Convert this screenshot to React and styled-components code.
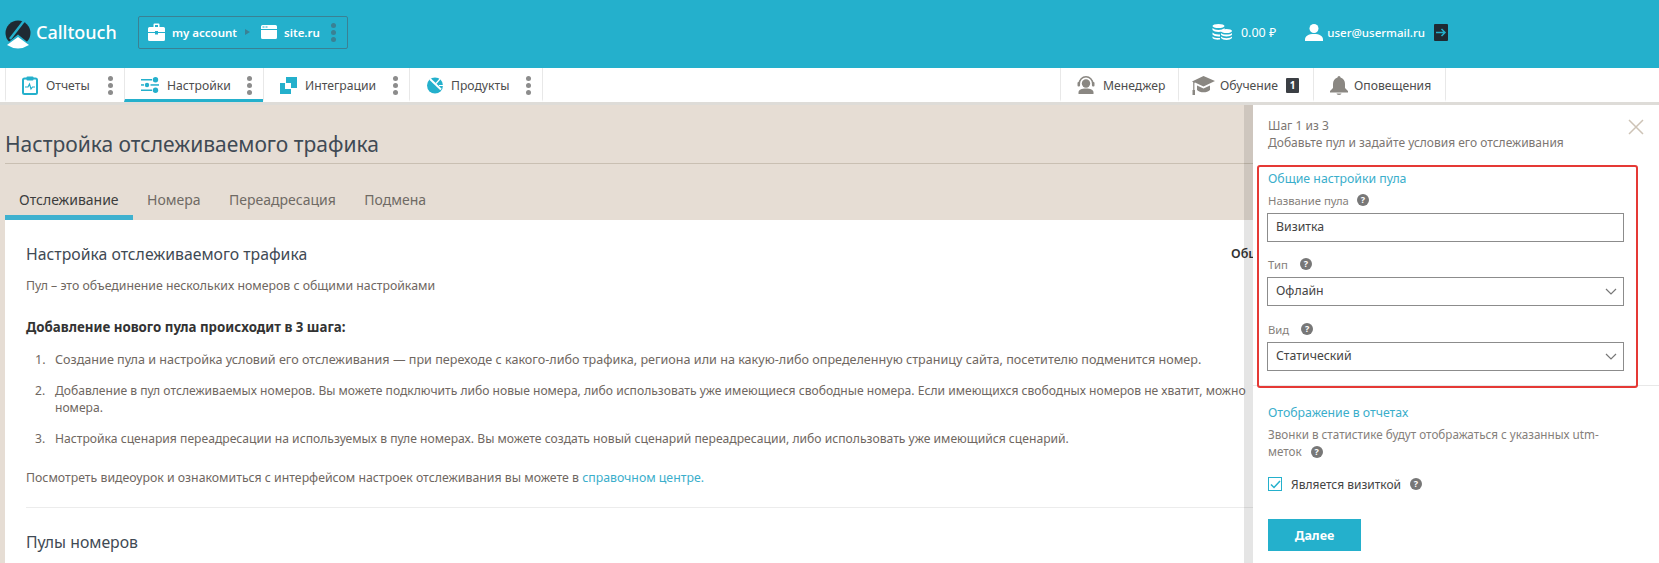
import React from 'react';
import styled, { createGlobalStyle } from 'styled-components';

const TEAL = '#24b0cc';
const FONT = '"Noto Sans", "Open Sans", sans-serif';

const GlobalStyle = createGlobalStyle`
  html, body { margin: 0; padding: 0; height: 100%; overflow: hidden; }
  body { font-family: ${FONT}; background: #fff; }
  * { box-sizing: border-box; }
`;

const Logo = () => (
  <svg width="26" height="29" viewBox="0 0 26 29">
    <circle cx="13" cy="13" r="12.5" fill="#1f2a33" />
    <path d="M0 25 L13 14.5 L26 25 V29 H0 Z" fill={TEAL} />
    <path d="M20.5 -1 L5 19" stroke={TEAL} strokeWidth="2.4" fill="none" />
    <path d="M13 17 L24 25 Q13 32 2 25 Z" fill="#fff" />
  </svg>
);

const Briefcase = () => (
  <svg width="17" height="18" viewBox="0 0 17 18" fill="#fff">
    <path d="M5.5 4V1.5A1 1 0 0 1 6.5.5h4a1 1 0 0 1 1 1V4H10V2H7v2z" />
    <path d="M1.5 4h14A1.5 1.5 0 0 1 17 5.5V9H10V8H7v1H0V5.5A1.5 1.5 0 0 1 1.5 4z" />
    <path d="M0 10h7v1.5h3V10h7v6.5a1.5 1.5 0 0 1-1.5 1.5h-14A1.5 1.5 0 0 1 0 16.5z" />
  </svg>
);

const WindowIcon = () => (
  <svg width="16" height="14" viewBox="0 0 16 14">
    <path d="M1.5 0h13A1.5 1.5 0 0 1 16 1.5V4H0V1.5A1.5 1.5 0 0 1 1.5 0z" fill="#fff" />
    <rect x="1.5" y="1.5" width="2" height="1" fill={TEAL} />
    <rect x="4.5" y="1.5" width="2" height="1" fill={TEAL} />
    <path d="M0 5h16v7.5a1.5 1.5 0 0 1-1.5 1.5h-13A1.5 1.5 0 0 1 0 12.5z" fill="#fff" />
  </svg>
);

const Coins = () => (
  <svg width="20" height="16" viewBox="0 0 20 16" fill="#fff">
    <ellipse cx="6.5" cy="2" rx="6" ry="2" />
    <path d="M.5 4c1 1.3 3.5 2 6 2s5-.7 6-2v2c-1 1.3-3.5 2-6 2s-5-.7-6-2z" />
    <path d="M.5 8.5c1 1.3 3.5 2 6 2 .5 0 1 0 1.5-.1v2c-.5.1-1 .1-1.5.1-2.500 0-5-.7-6-2z" />
    <path d="M.5 12.5c1 1 3.5 1.5 6 1.5.5 0 1 0 1.5-.1v1.600c-2.800.4-6.500 0-7.500-1.400z" />
    <ellipse cx="14.5" cy="7" rx="5.5" ry="2" />
    <path d="M9 9c1 1 3 1.6 5.5 1.6S19 10 20 9v1.800c-1 1.100-3 1.700-5.500 1.700S10 11.900 9 10.800z" />
    <path d="M9 12.6c1 1 3 1.6 5.5 1.6s4.500-.6 5.500-1.600v1.500c-1 1.200-3 1.900-5.500 1.900S10 15.300 9 14.100z" />
  </svg>
);

const UserIcon = () => (
  <svg width="18" height="17" viewBox="0 0 18 17" fill="#fff">
    <circle cx="9" cy="4.5" r="4.5" />
    <path d="M0 17v-1.500C0 12 3.500 10 9 10s9 2 9 5.500V17z" />
  </svg>
);

const Logout = () => (
  <svg width="14" height="17" viewBox="0 0 14 17">
    <rect width="14" height="17" rx="1" fill="#1f2a33" />
    <path d="M2 8.500h9M7.500 5l3.500 3.500L7.500 12" stroke={TEAL} strokeWidth="1.5" fill="none" />
  </svg>
);

const ClipboardIcon = () => (
  <svg width="16" height="19" viewBox="0 0 16 19">
    <rect x="1" y="2.5" width="14" height="15.500" rx="1.5" fill="#fff" stroke={TEAL} strokeWidth="2" />
    <rect x="4.5" y="0.5" width="7" height="4" rx="1" fill={TEAL} />
    <path d="M3 11h3l1.500-3 1.500 5 1.500-2H13" stroke={TEAL} strokeWidth="1.2" fill="none" />
  </svg>
);

const SlidersIcon = () => (
  <svg width="18" height="16" viewBox="0 0 18 16" fill={TEAL}>
    <rect y="2" width="11" height="1.5" />
    <circle cx="14.5" cy="2.7" r="2.7" />
    <rect y="7.2" width="3" height="1.5" />
    <circle cx="6" cy="8" r="2.2" />
    <rect x="9.5" y="7.2" width="8.5" height="1.5" />
    <rect y="12.5" width="11" height="1.5" />
    <circle cx="14.5" cy="13.3" r="2.7" />
  </svg>
);

const SquaresIcon = () => (
  <svg width="17" height="17" viewBox="0 0 17 17" fill={TEAL}>
    <path d="M6 0h11v11h-6V6H6z" />
    <path d="M0 6h5v6h6v5H0z" />
  </svg>
);

const ProductIcon = () => (
  <svg width="16" height="17" viewBox="0 0 16 17">
    <circle cx="8" cy="8.5" r="8" fill={TEAL} />
    <path d="M3 2l11 10.500" stroke="#fff" strokeWidth="2" />
    <path d="M9 6.500L13 2M12 8.500h4" stroke="#fff" strokeWidth="1.2" />
  </svg>
);

const ManagerIcon = () => (
  <svg width="18" height="18" viewBox="0 0 18 18" fill="#8a8782">
    <path d="M9 0a7.500 7.500 0 0 1 7.500 7.500v1.800h-1.600V7.500a5.900 5.900 0 0 0-11.800 0v1.800H1.500V7.500A7.500 7.500 0 0 1 9 0z" />
    <circle cx="9" cy="7.5" r="4.2" />
    <rect x="0.5" y="6" width="2.5" height="4.5" rx="1" />
    <rect x="15" y="6" width="2.5" height="4.5" rx="1" />
    <path d="M1.500 18v-1.500c0-2.800 3-4 7.500-4s7.500 1.200 7.500 4V18z" />
  </svg>
);

const CapIcon = () => (
  <svg width="23" height="19" viewBox="0 0 23 19" fill="#8a8782">
    <path d="M11.500 0L23 5 11.500 10.500 3 6.500 2.400 7V14H1.200V6.200L0 5.500z" />
    <path d="M5 9.500l6.500 3 6.500-3V14c-1.500 1.500-4 2.300-6.500 2.300S6.500 15.500 5 14z" />
    <rect x="0.5" y="14" width="2.5" height="5" />
  </svg>
);

const BellIcon = () => (
  <svg width="18" height="19" viewBox="0 0 18 19" fill="#8a8782">
    <path d="M9 0a1.500 1.500 0 0 1 1.500 1.500C13.500 2.300 15 5 15 8v4l3 3v1.500H0V15l3-3V8c0-3 1.500-5.700 4.500-6.500A1.500 1.500 0 0 1 9 0z" />
    <path d="M6.500 17.500h5a2.500 1.500 0 0 1-5 0z" />
  </svg>
);

const Chevron = () => (
  <svg width="12" height="7" viewBox="0 0 12 7">
    <path d="M1 1l5 5 5-5" stroke="#777" strokeWidth="1.2" fill="none" />
  </svg>
);

const Header = styled.header`
  height: 68px;
  background: ${TEAL};
  display: flex;
  align-items: center;
  padding: 0 211px 4px 5px;
`;

const Brand = styled.div`
  display: flex;
  align-items: center;
  gap: 5px;
  color: #fff;
  font-size: 18px;
  font-weight: 500;
  width: 133px;
  svg { flex: none; margin-top: 4px; }
`;

const AccountBox = styled.div`
  width: 210px;
  height: 33px;
  border: 1px solid #3a8194;
  border-radius: 2px;
  display: flex;
  align-items: center;
  padding: 0 11px 0 9px;
  color: #fff;
  font-size: 11.5px;
  font-weight: 600;
  white-space: nowrap;
`;

const BoxText = styled.span`
  margin-left: ${p => p.$gap}px;
`;

const Crumb = styled.span`
  width: 0;
  height: 0;
  margin: 0 11px 0 8px;
  border-left: 5px solid #3a8194;
  border-top: 3px solid transparent;
  border-bottom: 3px solid transparent;
`;

const Dots = styled.span`
  flex: none;
  width: 5px;
  height: 5px;
  margin-left: auto;
  border-radius: 50%;
  background: ${p => p.$color || '#8c8c8c'};
  box-shadow: 0 -7px 0 ${p => p.$color || '#8c8c8c'}, 0 7px 0 ${p => p.$color || '#8c8c8c'};
`;

const Account = styled.div`
  margin-left: auto;
  display: flex;
  align-items: center;
  color: #fff;
  font-size: 12.5px;
`;

const AccountText = styled.span`
  margin: ${p => p.$margin};
  font-size: ${p => p.$size || 12.5}px;
  font-weight: ${p => p.$weight || 400};
`;

const Nav = styled.nav`
  height: 37px;
  display: flex;
  background: #fff;
  padding: 0 213px 0 5px;
  border-bottom: 3px solid #dedcd8;
`;

const NavItem = styled.div`
  width: ${p => p.$width}px;
  display: flex;
  align-items: center;
  padding: 3px 11px 0 ${p => p.$pad}px;
  color: #4d4d4d;
  font-size: 12.2px;
  border-left: 1px solid #e8e8e8;
  border-right: ${p => (p.$last ? '1px solid #e8e8e8' : '0')};
  border-bottom: 3px solid ${p => (p.$active ? TEAL : 'transparent')};
  svg { flex: none; margin-right: ${p => p.$iconGap || 8}px; }
`;

const NavSpacer = styled.div`
  flex: 1;
`;

const Badge = styled.span`
  width: 13px;
  height: 15px;
  margin-left: 8px;
  border-radius: 1px;
  background: #3b3f44;
  color: #fff;
  font-size: 10px;
  font-weight: 700;
  line-height: 15px;
  text-align: center;
`;

const Body = styled.div`
  height: 458px;
  display: flex;
  overflow: hidden;
`;

const Main = styled.main`
  flex: 1;
  min-width: 0;
  display: flex;
  flex-direction: column;
  background: #e6ddd4;
  padding-top: 25px;
`;

const Title = styled.h1`
  margin: 0 0 0 5px;
  height: 34px;
  padding-bottom: 6px;
  border-bottom: 1px solid #c9bfb2;
  color: #3f4a54;
  font-size: 21px;
  font-weight: 400;
  line-height: 28px;
`;

const Tabs = styled.div`
  display: flex;
  margin: 17px 0 0 5px;
`;

const Tab = styled.div`
  height: 39px;
  padding: 9px 14px 0;
  margin-right: 0.5px;
  color: ${p => (p.$active ? '#3d3d3d' : '#6f6a64')};
  font-size: 14px;
  line-height: 20px;
  border-bottom: 5px solid ${p => (p.$active ? '#3fb1cf' : 'transparent')};
`;

const Card = styled.section`
  flex: 1;
  min-height: 0;
  margin-left: 5px;
  padding: 22px 0 0 21px;
  background: #fff;
  overflow: hidden;
  color: #6f6761;
  font-size: 12.3px;
  line-height: 17px;
`;

const CardHead = styled.div`
  display: flex;
  justify-content: space-between;
`;

const Heading = styled.h2`
  margin: 0;
  color: #3f4a54;
  font-size: 15.8px;
  font-weight: 400;
  line-height: 24px;
`;

const HeadAside = styled.div`
  width: 22px;
  overflow: hidden;
  white-space: nowrap;
  color: #333;
  font-size: 12.5px;
  font-weight: 600;
  line-height: 24px;
`;

const Lead = styled.p`
  margin: 11px 0 0;
`;

const Strong = styled.p`
  margin: 25px 0 0;
  color: #333;
  font-size: 13.3px;
  font-weight: 700;
`;

const Steps = styled.ol`
  margin: 15px 0 0;
  padding: 0;
  list-style: none;
  counter-reset: step;
`;

const Step = styled.li`
  display: flex;
  white-space: nowrap;
  margin-bottom: 14px;
  font-size: ${p => p.$size}px;
  counter-increment: step;
  &::before {
    content: counter(step) '.';
    flex: none;
    width: 20px;
    margin-left: 9px;
  }
`;

const More = styled.p`
  margin: 22px 0 0;
  white-space: nowrap;
`;

const HelpLink = styled.a`
  color: #3aaecb;
`;

const Rule = styled.hr`
  margin: 21px 0 22px;
  border: 0;
  border-top: 1px solid #ececec;
`;

const Panel = styled.aside`
  position: relative;
  flex: none;
  width: 406px;
  padding-top: 12px;
  background: #fff;
  box-shadow: -9px 0 0 rgba(0, 0, 0, 0.1);
  font-size: 12px;
  line-height: 17px;
  color: #7c7672;
`;

const PanelHead = styled.div`
  padding-left: 15px;
`;

const Close = styled.svg`
  position: absolute;
  top: 14px;
  right: 15px;
`;

const Highlight = styled.div`
  position: relative;
  z-index: 1;
  width: 381px;
  height: 223px;
  margin: 14px 0 0 4px;
  padding: 3px 0 0 8px;
  border: 2px solid #e53935;
  border-radius: 3px;
`;

const GroupTitle = styled.div`
  margin-left: 1px;
  color: #3aaecb;
  font-size: 12.3px;
  line-height: 18px;
`;

const ReportsTitle = styled(GroupTitle)`
  margin-left: 0;
`;

const Label = styled.div`
  display: flex;
  align-items: center;
  margin: ${p => p.$top}px 0 5px 1px;
  height: 16px;
  color: #85807b;
  font-size: 11.3px;
`;

const Help = styled.span`
  flex: none;
  width: 12px;
  height: 12px;
  margin-left: ${p => p.$left || 8}px;
  border-radius: 50%;
  background: #777;
  color: #fff;
  font-size: 9px;
  font-weight: 700;
  line-height: 12px;
  text-align: center;
`;

const Field = styled.div`
  width: 357px;
  height: 29px;
  display: flex;
  align-items: center;
  justify-content: space-between;
  padding: 0 6px 2px 8px;
  border: 1px solid #8c8c8c;
  color: #444;
  font-size: 12.3px;
  svg { margin-top: 2px; }
`;

const Reports = styled.div`
  margin-top: -3px;
  padding: 18px 0 0 15px;
  border-top: 1px solid #e8e8e8;
`;

const Note = styled.div`
  display: flex;
  align-items: center;
  margin-top: ${p => p.$top || 0}px;
  color: #85807b;
  font-size: 11.7px;
`;

const CheckRow = styled.div`
  display: flex;
  align-items: center;
  height: 14px;
  margin-top: 17px;
  color: #444;
`;

const Check = styled.span`
  display: flex;
  align-items: center;
  justify-content: center;
  width: 14px;
  height: 14px;
  margin-right: 9px;
  border: 1px solid ${TEAL};
`;

const NextButton = styled.button`
  display: block;
  width: 93px;
  height: 32px;
  margin-top: 28px;
  border: 0;
  background: ${TEAL};
  color: #fff;
  font-family: ${FONT};
  font-size: 12.5px;
  font-weight: 700;
`;

export default function App() {
  return (
    <>
      <GlobalStyle />
      <Header>
        <Brand><Logo />Calltouch</Brand>
        <AccountBox>
          <Briefcase />
          <BoxText $gap={7}>my account</BoxText>
          <Crumb />
          <WindowIcon />
          <BoxText $gap={7}>site.ru</BoxText>
          <Dots $color="#3a8194" />
        </AccountBox>
        <Account>
          <Coins />
          <AccountText $margin="0 29px 0 9px">0.00 ₽</AccountText>
          <UserIcon />
          <AccountText $margin="0 9px 0 4px" $size={11.5} $weight={500}>user@usermail.ru</AccountText>
          <Logout />
        </Account>
      </Header>
      <Nav>
        <NavItem $width={119} $pad={16}><ClipboardIcon />Отчеты<Dots /></NavItem>
        <NavItem $width={139} $pad={16} $active><SlidersIcon />Настройки<Dots /></NavItem>
        <NavItem $width={146} $pad={16}><SquaresIcon />Интеграции<Dots /></NavItem>
        <NavItem $width={134} $pad={17} $last><ProductIcon />Продукты<Dots /></NavItem>
        <NavSpacer />
        <NavItem $width={118} $pad={16}><ManagerIcon />Менеджер</NavItem>
        <NavItem $width={135} $pad={13} $iconGap={5}><CapIcon />Обучение<Badge>1</Badge></NavItem>
        <NavItem $width={133} $pad={16} $iconGap={6} $last><BellIcon />Оповещения</NavItem>
      </Nav>
      <Body>
        <Main>
          <Title>Настройка отслеживаемого трафика</Title>
          <Tabs>
            <Tab $active>Отслеживание</Tab>
            <Tab>Номера</Tab>
            <Tab>Переадресация</Tab>
            <Tab>Подмена</Tab>
          </Tabs>
          <Card>
            <CardHead>
              <Heading>Настройка отслеживаемого трафика</Heading>
              <HeadAside>Общ</HeadAside>
            </CardHead>
            <Lead>Пул – это объединение нескольких номеров с общими настройками</Lead>
            <Strong>Добавление нового пула происходит в 3 шага:</Strong>
            <Steps>
              <Step $size={12.6}><span>Создание пула и настройка условий его отслеживания — при переходе с какого-либо трафика, региона или на какую-либо определенную страницу сайта, посетителю подменится номер.</span></Step>
              <Step $size={12.1}><span>Добавление в пул отслеживаемых номеров. Вы можете подключить либо новые номера, либо использовать уже имеющиеся свободные номера. Если имеющихся свободных номеров не хватит, можно<br />номера.</span></Step>
              <Step $size={12.15}><span>Настройка сценария переадресации на используемых в пуле номерах. Вы можете создать новый сценарий переадресации, либо использовать уже имеющийся сценарий.</span></Step>
            </Steps>
            <More>Посмотреть видеоурок и ознакомиться с интерфейсом настроек отслеживания вы можете в <HelpLink>справочном центре.</HelpLink></More>
            <Rule />
            <Heading>Пулы номеров</Heading>
          </Card>
        </Main>
        <Panel>
          <PanelHead>
            Шаг 1 из 3<br />
            Добавьте пул и задайте условия его отслеживания
          </PanelHead>
          <Close width="16" height="16" viewBox="0 0 16 16">
            <path d="M1 1l14 14M15 1L1 15" stroke="#cdc3b6" strokeWidth="1.5" />
          </Close>
          <Highlight>
            <GroupTitle>Общие настройки пула</GroupTitle>
            <Label $top={4}>Название пула<Help>?</Help></Label>
            <Field>Визитка</Field>
            <Label $top={14}>Тип<Help $left={12}>?</Help></Label>
            <Field>Офлайн<Chevron /></Field>
            <Label $top={15}>Вид<Help $left={12}>?</Help></Label>
            <Field>Статический<Chevron /></Field>
          </Highlight>
          <Reports>
            <ReportsTitle>Отображение в отчетах</ReportsTitle>
            <Note $top={4}>Звонки в статистике будут отображаться с указанных utm-</Note>
            <Note>меток<Help $left={9}>?</Help></Note>
            <CheckRow>
              <Check>
                <svg width="11" height="9" viewBox="0 0 11 9">
                  <path d="M1 4.500l3 3 6-6.500" stroke={TEAL} strokeWidth="1.5" fill="none" />
                </svg>
              </Check>
              Является визиткой<Help $left={9}>?</Help>
            </CheckRow>
            <NextButton>Далее</NextButton>
          </Reports>
        </Panel>
      </Body>
    </>
  );
}
